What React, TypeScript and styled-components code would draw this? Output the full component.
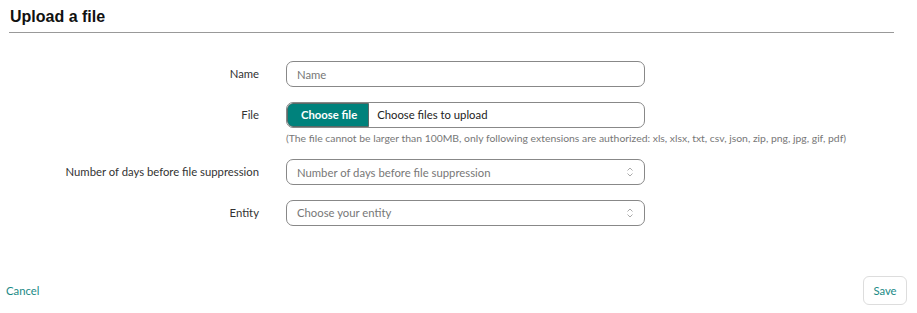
import styled, { createGlobalStyle } from 'styled-components';

const GlobalStyle = createGlobalStyle`
  body {
    margin: 0;
    background: #fff;
    font-family: Lato, "Noto Sans", sans-serif;
    color: #333;
  }
`;

const Page = styled.div`
  height: 313px;
  display: flex;
  flex-direction: column;
`;

const Header = styled.div`
  margin: 0 23px 0 9px;
  padding: 7px 1px 6px;
  border-bottom: 1px solid #999;
`;

const Title = styled.h1`
  margin: 0;
  font-family: 'Liberation Sans', Arial, sans-serif;
  font-size: 16px;
  line-height: 19px;
  font-weight: bold;
  color: #111;
`;

const Form = styled.div`
  display: grid;
  grid-template-columns: 259px 359px;
  column-gap: 27px;
  row-gap: 14.5px;
  align-items: center;
  margin-top: 28px;
`;

const Label = styled.label`
  text-align: right;
  font-size: 11.3px;
  color: #333;
  align-self: start;
  line-height: 26px;
`;

const Field = styled.div`
  display: flex;
  flex-direction: column;
`;

const Input = styled.div`
  box-sizing: border-box;
  height: 26px;
  border: 1px solid #888;
  border-radius: 7px;
  display: flex;
  align-items: center;
  padding: 0 10px;
  font-size: 11.3px;
  color: #777;
  justify-content: space-between;
`;

const FileBox = styled.div`
  box-sizing: border-box;
  height: 26px;
  border: 1px solid #888;
  border-radius: 7px;
  display: flex;
  align-items: stretch;
  overflow: hidden;
  font-size: 11.3px;
`;

const ChooseButton = styled.div`
  background: #00827c;
  color: #fff;
  font-weight: bold;
  display: flex;
  align-items: center;
  padding: 0 11px 0 13px;
  border: 1px solid #5a6a68;
  border-radius: 6px 0 0 6px;
`;

const FileText = styled.div`
  display: flex;
  align-items: center;
  padding-left: 8px;
  color: #222;
`;

const Hint = styled.div`
  font-size: 10.4px;
  color: #777;
  margin-top: 4px;
  white-space: nowrap;
  margin-bottom: 1px;
`;

const Footer = styled.div`
  margin-top: auto;
  display: flex;
  justify-content: space-between;
  align-items: center;
  padding: 0 10px 8px 6px;
`;

const CancelLink = styled.span`
  color: #1a8a86;
  font-size: 11.3px;
`;

const SaveButton = styled.button`
  font-family: inherit;
  font-size: 11.3px;
  color: #1a8a86;
  background: #fff;
  border: 1px solid #ddd;
  border-radius: 6px;
  width: 44px;
  height: 29px;
`;

const Chevrons = () => (
  <svg width="8" height="12" viewBox="0 0 8 12" fill="none" stroke="#aaa" strokeWidth="1">
    <path d="M1.5 4.5 L4 2 L6.5 4.5" />
    <path d="M1.5 7.5 L4 10 L6.5 7.5" />
  </svg>
);

export default function App() {
  return (
    <>
      <GlobalStyle />
      <Page>
        <Header>
          <Title>Upload a file</Title>
        </Header>
        <Form>
          <Label>Name</Label>
          <Field>
            <Input>Name</Input>
          </Field>

          <Label>File</Label>
          <Field>
            <FileBox>
              <ChooseButton>Choose file</ChooseButton>
              <FileText>Choose files to upload</FileText>
            </FileBox>
            <Hint>
              (The file cannot be larger than 100MB, only following extensions are authorized: xls,
              xlsx, txt, csv, json, zip, png, jpg, gif, pdf)
            </Hint>
          </Field>

          <Label>Number of days before file suppression</Label>
          <Field>
            <Input>
              Number of days before file suppression
              <Chevrons />
            </Input>
          </Field>

          <Label>Entity</Label>
          <Field>
            <Input>
              Choose your entity
              <Chevrons />
            </Input>
          </Field>
        </Form>
        <Footer>
          <CancelLink>Cancel</CancelLink>
          <SaveButton>Save</SaveButton>
        </Footer>
      </Page>
    </>
  );
}
